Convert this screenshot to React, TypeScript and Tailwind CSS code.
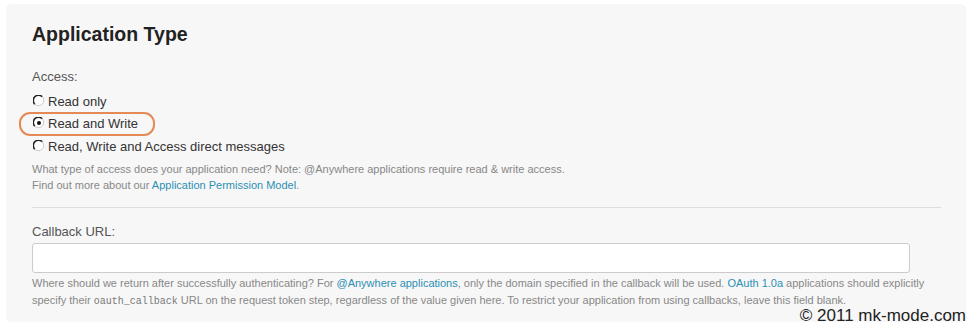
import React from 'react'

function Radio({ checked }: { checked?: boolean }) {
  return (
    <svg width="12" height="12" viewBox="0 0 12 12" className="shrink-0">
      <circle cx="6" cy="6" r="5" fill="#fff" />
      <path d="M1.8 9.2 A5 5 0 0 1 9.2 1.8" fill="none" stroke="#222" strokeWidth="1.6" />
      <path d="M9.2 1.8 A5 5 0 0 1 1.8 9.2" fill="none" stroke="#c8c8c8" strokeWidth="1" />
      {checked && <circle cx="6" cy="6" r="2" fill="#111" />}
    </svg>
  )
}

const options = [
  { label: 'Read only', checked: false },
  { label: 'Read and Write', checked: true },
  { label: 'Read, Write and Access direct messages', checked: false },
]

export default function App() {
  return (
    <div className="relative w-[972px] h-[328px] bg-white pt-[4px] pl-[6px] font-['Liberation_Sans',Arial,sans-serif]">
      <div className="w-[960px] h-[318px] bg-[#f7f7f7] rounded-[5px] px-[26px] pt-[18px]">
        <h2 className="text-[19.5px] leading-[24px] font-bold text-[#222]">Application Type</h2>

        <div className="mt-[23px] text-[13px] leading-[16px] text-[#555]">Access:</div>

        <div className="mt-[6px] flex flex-col">
          {options.map((o, i) => (
            <div
              key={o.label}
              className={`relative h-[22px] flex items-center gap-[3px] text-[13px] text-[#333] ${i === 2 ? 'mt-[1px]' : ''}`}
            >
              <span className="mb-[2px] ml-[1px]">
                <Radio checked={o.checked} />
              </span>
              <span>{o.label}</span>
              {o.checked && (
                <span className="absolute left-[-13px] top-[-1px] w-[136px] h-[24px] rounded-[11px] border-2 border-[#e58a55]" />
              )}
            </div>
          ))}
        </div>

        <div className="mt-[3px] text-[11px] leading-[16px] text-[#888]">
          <p>What type of access does your application need? Note: @Anywhere applications require read &amp; write access.</p>
          <p>
            Find out more about our <span className="text-[#2b90b3]">Application Permission Model</span>.
          </p>
        </div>

        <div className="mt-[14px] w-[909px] border-t border-[#dddddd]" />

        <div className="mt-[16px] text-[13px] leading-[16px] text-[#555]">Callback URL:</div>
        <input
          type="text"
          className="mt-[3px] block w-[878px] h-[30px] bg-white border border-[#cccccc] rounded-[3px] outline-none"
        />
        <div className="mt-[2px] text-[11px] leading-[17px] text-[#888]">
          <p>
            Where should we return after successfully authenticating? For{' '}
            <span className="text-[#2b90b3]">@Anywhere applications</span>, only the domain specified in the callback will be used.{' '}
            <span className="text-[#2b90b3]">OAuth 1.0a</span> applications should explicitly
          </p>
          <p>
            specify their <span className="font-['Liberation_Mono',monospace] text-[10px] text-[#777]">oauth_callback</span> URL on the
            request token step, regardless of the value given here. To restrict your application from using callbacks, leave this field blank.
          </p>
        </div>
      </div>

      <span className="absolute right-[6px] bottom-[3px] text-[17px] leading-[18px] text-[#222]">© 2011 mk-mode.com</span>
    </div>
  )
}
